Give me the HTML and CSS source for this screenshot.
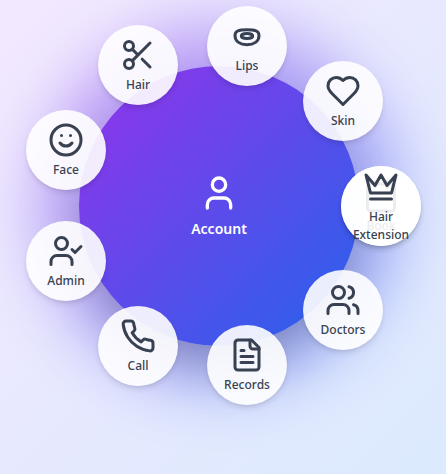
FILE: index.html
```html
<!DOCTYPE html>
<html lang="en">
<head>
<meta charset="utf-8">
<meta name="viewport" content="width=device-width, initial-scale=1">
<title>Account</title>
<link rel="stylesheet" href="styles.css">
</head>
<body>
<main class="page">
  <nav class="wheel" aria-label="Account menu">
    <button class="hub" type="button">
      <svg class="hub-icon" viewBox="0 0 24 24"><path d="M19 21v-2a4 4 0 0 0-4-4H9a4 4 0 0 0-4 4v2"/><circle cx="12" cy="7" r="4"/></svg>
      <span>Account</span>
    </button>
    <button class="node" type="button" style="--angle: 0deg">
      <svg class="icon" viewBox="0 0 24 24"><path d="M8 2v4M16 2v4M3 10h18"/><rect x="3" y="4" width="18" height="18" rx="2"/></svg>
      <span>Book</span>
    </button>
    <button class="node" type="button" style="--angle: 40deg">
      <svg class="icon" viewBox="0 0 24 24"><path d="M16 21v-2a4 4 0 0 0-4-4H6a4 4 0 0 0-4 4v2"/><circle cx="9" cy="7" r="4"/><path d="M22 21v-2a4 4 0 0 0-3-3.87M16 3.13a4 4 0 0 1 0 7.75"/></svg>
      <span>Doctors</span>
    </button>
    <button class="node" type="button" style="--angle: 80deg">
      <svg class="icon" viewBox="0 0 24 24"><path d="M15 2H6a2 2 0 0 0-2 2v16a2 2 0 0 0 2 2h12a2 2 0 0 0 2-2V7Z"/><path d="M14 2v4a2 2 0 0 0 2 2h4M10 9H8M16 13H8M16 17H8"/></svg>
      <span>Records</span>
    </button>
    <button class="node" type="button" style="--angle: 120deg">
      <svg class="icon" viewBox="0 0 24 24"><path d="M22 16.92v3a2 2 0 0 1-2.18 2 19.79 19.79 0 0 1-8.63-3.07 19.5 19.5 0 0 1-6-6 19.79 19.79 0 0 1-3.07-8.67A2 2 0 0 1 4.11 2h3a2 2 0 0 1 2 1.72 12.84 12.84 0 0 0 .7 2.81 2 2 0 0 1-.45 2.11L8.09 9.91a16 16 0 0 0 6 6l1.27-1.27a2 2 0 0 1 2.11-.45 12.84 12.84 0 0 0 2.81.7A2 2 0 0 1 22 16.92z"/></svg>
      <span>Call</span>
    </button>
    <button class="node" type="button" style="--angle: 160deg">
      <svg class="icon" viewBox="0 0 24 24"><path d="M16 21v-2a4 4 0 0 0-4-4H6a4 4 0 0 0-4 4v2"/><circle cx="9" cy="7" r="4"/><path d="m16 11 2 2 4-4"/></svg>
      <span>Admin</span>
    </button>
    <button class="node" type="button" style="--angle: 200deg">
      <svg class="icon" viewBox="0 0 24 24"><circle cx="12" cy="12" r="10"/><path d="M8 14s1.5 2 4 2 4-2 4-2M9 9h.01M15 9h.01"/></svg>
      <span>Face</span>
    </button>
    <button class="node" type="button" style="--angle: 240deg">
      <svg class="icon" viewBox="0 0 24 24"><circle cx="6" cy="6" r="3"/><circle cx="6" cy="18" r="3"/><path d="M8.12 8.12 12 12M20 4 8.12 15.88M14.8 14.8 20 20"/></svg>
      <span>Hair</span>
    </button>
    <button class="node" type="button" style="--angle: 280deg">
      <svg class="icon" viewBox="0 0 24 24"><path d="M4 11.7c0-2.9 2-3.9 8-3.9s8 1 8 3.9c0 4-3.5 6.100-8 6.100S4 15.700 4 11.700z"/><ellipse cx="12" cy="12" rx="3.8" ry="1.6"/></svg>
      <span>Lips</span>
    </button>
    <button class="node" type="button" style="--angle: 320deg">
      <svg class="icon" viewBox="0 0 24 24"><path d="M19 14c1.49-1.46 3-3.21 3-5.5A5.5 5.5 0 0 0 16.5 3c-1.76 0-3 .5-4.5 2-1.5-1.5-2.74-2-4.5-2A5.5 5.5 0 0 0 2 8.5c0 2.3 1.5 4.05 3 5.5l7 7Z"/></svg>
      <span>Skin</span>
    </button>
    <button class="node" type="button" style="--angle: 360deg">
      <svg class="icon" viewBox="0 0 24 24"><path d="m2 4 3 12h14l3-12-6 7-4-7-4 7-6-7zM5 20h14"/></svg>
      <span>Hair Extension</span>
    </button>
  </nav>
</main>
</body>
</html>
```
FILE: styles.css
```css
* {
  box-sizing: border-box;
}

body {
  margin: 0;
  font-family: "Noto Sans", "Open Sans", sans-serif;
}

.page {
  display: flex;
  justify-content: center;
  min-height: 100vh;
  padding: 66px 8px 64px 0;
  overflow: hidden;
  background: linear-gradient(135deg, #f3e8ff, #dbeafe);
}

.wheel {
  --size: 280px;
  --orbit: 162px;
  position: relative;
  width: var(--size);
  height: var(--size);
}

.wheel::before {
  content: "";
  position: absolute;
  inset: -40px;
  border-radius: 50%;
  background: linear-gradient(135deg, #9333ea, #2563eb);
  filter: blur(32px);
  opacity: 0.45;
}

button {
  display: flex;
  flex-direction: column;
  align-items: center;
  justify-content: center;
  padding: 0;
  border: 0;
  border-radius: 50%;
  font-family: inherit;
  cursor: pointer;
}

svg {
  flex: none;
  fill: none;
  stroke: currentColor;
  stroke-width: 2;
  stroke-linecap: round;
  stroke-linejoin: round;
}

.hub {
  position: relative;
  width: 100%;
  height: 100%;
  gap: 4px;
  padding-top: 2px;
  background: linear-gradient(135deg, #9333ea, #2563eb);
  box-shadow: 0 25px 50px -12px rgba(0, 0, 0, 0.25);
  color: #fff;
  font-size: 14px;
  font-weight: 600;
  line-height: 24px;
}

.hub-icon {
  width: 40px;
  height: 40px;
}

.node {
  position: absolute;
  top: round(down, calc(50% - 40px + sin(var(--angle)) * var(--orbit)), 1px);
  left: round(down, calc(50% - 40px + cos(var(--angle)) * var(--orbit)), 1px);
  width: 80px;
  height: 80px;
  gap: 3px;
  background: rgba(255, 255, 255, 0.9);
  box-shadow: 0 4px 6px -1px rgba(0, 0, 0, 0.1), 0 2px 4px -2px rgba(0, 0, 0, 0.1);
  color: #374151;
  font-size: 12px;
  font-weight: 500;
  line-height: 18px;
}

.icon {
  width: 36px;
  height: 36px;
}
```
